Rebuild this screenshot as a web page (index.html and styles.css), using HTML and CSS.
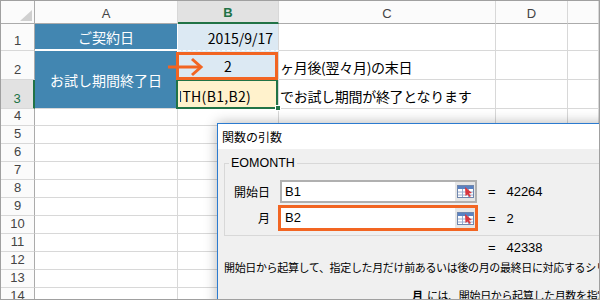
FILE: index.html
```html
<!DOCTYPE html>
<html lang="ja">
<head>
  <meta charset="UTF-8">
  <title>EOMONTH</title>
  <link rel="stylesheet" href="styles.css">
</head>
<body>

<div class="sheet">
  <div class="grid">
    <div class="corner"></div>
    <div class="colhead">A</div>
    <div class="colhead sel">B</div>
    <div class="colhead">C</div>
    <div class="colhead">D</div>
    <div class="colhead"></div>

    <div class="rowhead">1</div>
    <div class="cell blue">ご契約日</div>
    <div class="cell lightblue num">2015/9/17</div>
    <div class="cell"></div>
    <div class="cell"></div>
    <div class="cell"></div>

    <div class="rowhead">2</div>
    <div class="cell blue merged">お試し期間終了日</div>
    <div class="cell lightblue mid">2<span class="hl-box"></span></div>
    <div class="cell text">ヶ月後(翌々月)の末日</div>
    <div class="cell"></div>
    <div class="cell"></div>

    <div class="rowhead sel">3</div>
    <div class="cell yellow formula"><span class="clip"><span>=EOMONTH(B1,B2)</span></span><span class="sel-box"></span><span class="handle"></span></div>
    <div class="cell text">でお試し期間が終了となります</div>
    <div class="cell"></div>
    <div class="cell"></div>

    <div class="rowhead">4</div><div class="cell"></div><div class="cell"></div><div class="cell"></div><div class="cell"></div><div class="cell"></div>
    <div class="rowhead">5</div><div class="cell"></div><div class="cell"></div><div class="cell"></div><div class="cell"></div><div class="cell"></div>
    <div class="rowhead">6</div><div class="cell"></div><div class="cell"></div><div class="cell"></div><div class="cell"></div><div class="cell"></div>
    <div class="rowhead">7</div><div class="cell"></div><div class="cell"></div><div class="cell"></div><div class="cell"></div><div class="cell"></div>
    <div class="rowhead">8</div><div class="cell"></div><div class="cell"></div><div class="cell"></div><div class="cell"></div><div class="cell"></div>
    <div class="rowhead">9</div><div class="cell"></div><div class="cell"></div><div class="cell"></div><div class="cell"></div><div class="cell"></div>
    <div class="rowhead">10</div><div class="cell"></div><div class="cell"></div><div class="cell"></div><div class="cell"></div><div class="cell"></div>
    <div class="rowhead">11</div><div class="cell"></div><div class="cell"></div><div class="cell"></div><div class="cell"></div><div class="cell"></div>
    <div class="rowhead">12</div><div class="cell"></div><div class="cell"></div><div class="cell"></div><div class="cell"></div><div class="cell"></div>
    <div class="rowhead">13</div><div class="cell"></div><div class="cell"></div><div class="cell"></div><div class="cell"></div><div class="cell"></div>
    <div class="rowhead">14</div><div class="cell"></div><div class="cell"></div><div class="cell"></div><div class="cell"></div><div class="cell"></div>
  </div>

  <svg class="arrow" width="38" height="20" viewBox="0 0 38 20">
    <path d="M1 10 H34" stroke="#f26522" stroke-width="3" fill="none"/>
    <path d="M25 2 L34 10 L25 18" stroke="#f26522" stroke-width="3" fill="none" stroke-linejoin="miter"/>
  </svg>

  <div class="dialog">
    <div class="title">関数の引数</div>
    <div class="body">
      <fieldset class="group">
        <legend>EOMONTH</legend>
        <div class="args">
          <div class="label">開始日</div>
          <div class="field">
            <span class="val">B1</span>
            <span class="pick"><svg width="17" height="13" viewBox="0 0 17 13">
              <rect x="0.5" y="0.5" width="16" height="12" fill="#fff" stroke="#6f86ad"/>
              <rect x="1" y="1" width="15" height="3" fill="#5a82c2"/>
              <path d="M1 7 H16 M1 10 H16 M5.5 4 V12 M11.5 4 V12" stroke="#9aaed0" stroke-width="1"/>
              <path d="M8 2 L15 8 L12 8.5 L14 11 L12.5 12 L10.5 9.5 L8.5 11 Z" fill="#d9363e"/>
            </svg></span>
          </div>
          <div class="result">=&nbsp;&nbsp;&nbsp;42264</div>

          <div class="label">月</div>
          <div class="field hl">
            <span class="val">B2</span>
            <span class="pick"><svg width="17" height="13" viewBox="0 0 17 13">
              <rect x="0.5" y="0.5" width="16" height="12" fill="#fff" stroke="#6f86ad"/>
              <rect x="1" y="1" width="15" height="3" fill="#5a82c2"/>
              <path d="M1 7 H16 M1 10 H16 M5.5 4 V12 M11.5 4 V12" stroke="#9aaed0" stroke-width="1"/>
              <path d="M8 2 L15 8 L12 8.5 L14 11 L12.5 12 L10.5 9.5 L8.5 11 Z" fill="#d9363e"/>
            </svg></span>
          </div>
          <div class="result">=&nbsp;&nbsp;&nbsp;2</div>
        </div>
      </fieldset>
      <div class="total">=&nbsp;&nbsp;&nbsp;42338</div>
      <div class="desc">開始日から起算して、指定した月だけ前あるいは後の月の最終日に対応するシリアル値を返します。</div>
      <div class="note"><b>月</b>&nbsp;&nbsp;には、開始日から起算した月数を指定します。</div>
    </div>
  </div>
</div>

</body>
</html>
```

FILE: styles.css
```css
* { box-sizing: border-box; }
body {
  margin: 0;
  font-family: "Noto Sans CJK JP", "Noto Sans", sans-serif;
  color: #000;
  background: #fff;
}
.sheet {
  position: relative;
  width: 600px;
  height: 300px;
  border: 1px solid #a0a0a0;
  overflow: hidden;
}
.grid {
  display: grid;
  grid-template-columns: 34px 143px 101px 217px 72px 1fr;
  grid-template-rows: 23px 27px 29px 29px 17px repeat(10, 18px);
}
.corner, .colhead, .rowhead {
  background: #fbfbfb;
  color: #444;
  font-family: "Liberation Sans", "Noto Sans", sans-serif;
}
.corner {
  position: relative;
  border-right: 1px solid #ababab;
  border-bottom: 1px solid #ababab;
}
.corner::after {
  content: "";
  position: absolute;
  left: 19px;
  top: 9px;
  width: 12px;
  height: 11px;
  background: #d0d0d0;
  clip-path: polygon(100% 0, 100% 100%, 0 100%);
}
.colhead {
  display: flex;
  align-items: center;
  justify-content: center;
  font-size: 13px;
  border-right: 1px solid #d8d8d8;
  border-bottom: 1px solid #ababab;
  padding-top: 2px;
}
.colhead.sel {
  background: #e2e2e2;
  color: #217346;
  font-weight: bold;
  border-bottom: 2px solid #217346;
}
.rowhead {
  display: flex;
  align-items: flex-end;
  justify-content: center;
  font-size: 13px;
  line-height: 16px;
  padding-bottom: 1px;
  border-right: 1px solid #ababab;
  border-bottom: 1px solid #d8d8d8;
}
.rowhead.sel {
  background: #e2e2e2;
  color: #217346;
  border-right: 2px solid #217346;
}
.cell {
  position: relative;
  border-right: 1px solid #d8d8d8;
  border-bottom: 1px solid #d8d8d8;
  font-size: 14px;
  line-height: 18px;
  display: flex;
  align-items: flex-end;
  padding: 0 3px 3px;
  white-space: nowrap;
}
.cell.blue {
  background: #4286b1;
  color: #fff;
  justify-content: center;
  align-items: center;
  padding: 0;
  border-right: 1px solid #fff;
  border-bottom: 2px solid #fff;
}
.cell.merged {
  grid-row: span 2;
  border-bottom: 1px solid #d8d8d8;
}
.cell.lightblue {
  background: #dce9f3;
  border-bottom: 1px dashed #fff;
}
.cell.num { justify-content: flex-end; padding-right: 5px; }
.cell.mid { justify-content: center; padding-bottom: 4px; }
.cell.yellow { background: #fff2cc; }
.cell.text {
  overflow: visible;
  padding-left: 1px;
  letter-spacing: -0.3px;
  z-index: 1;
}
.cell.formula {
  padding: 0 27px 3px 2px;
  z-index: 2;
}
.clip {
  display: flex;
  justify-content: flex-end;
  width: 100%;
  overflow: hidden;
  letter-spacing: 0.3px;
}
.clip span { flex: none; }
.hl-box {
  position: absolute;
  left: -2px;
  top: 1px;
  width: 102px;
  height: 28px;
  border: 3px solid #f26522;
  z-index: 3;
}
.sel-box {
  position: absolute;
  left: -2px;
  top: -1px;
  width: 102px;
  height: 30px;
  border: 2px solid #217346;
}
.handle {
  position: absolute;
  right: -3px;
  bottom: -3px;
  width: 6px;
  height: 6px;
  background: #217346;
  border: 1px solid #fff;
}
.arrow {
  position: absolute;
  left: 166px;
  top: 56px;
  z-index: 4;
}
.dialog {
  position: absolute;
  left: 216px;
  top: 122px;
  width: 420px;
  height: 220px;
  border: 1px solid #2b7bd0;
  background: #f0f0f0;
  box-shadow: 0 0 12px rgba(0, 0, 0, 0.3);
  z-index: 5;
  font-size: 12px;
}
.title {
  height: 25px;
  line-height: 25px;
  background: #fff;
  padding-left: 4px;
}
.body {
  padding: 6px 0 0 6px;
}
.group {
  margin: 0;
  padding: 0 0 4px 0;
  border: 1px solid #d8d8d8;
  min-width: 0;
}
.group legend {
  margin-left: 4px;
  padding: 0 2px;
  font-family: "Liberation Sans", "Noto Sans", sans-serif;
  font-size: 12.5px;
  line-height: 16px;
}
.args {
  display: grid;
  grid-template-columns: 45px 197px auto;
  grid-template-rows: 23px 26px;
  column-gap: 10px;
  row-gap: 2px;
  align-items: center;
  margin-top: 9px;
}
.label {
  text-align: right;
  line-height: 16px;
}
.field {
  display: flex;
  height: 23px;
  border: 2px solid #b0b0b0;
  background: #fff;
}
.field.hl {
  height: 26px;
  width: 200px;
  margin-left: -2px;
  border: 3px solid #f26522;
}
.val {
  flex: 1;
  padding-left: 3px;
  font-family: "Liberation Sans", "Noto Sans", sans-serif;
  font-size: 13px;
  line-height: 19px;
}
.field.hl .val { line-height: 20px; padding-left: 4px; }
.pick {
  width: 20px;
  background: #e6e6e6;
  display: flex;
  align-items: center;
  justify-content: center;
}
.result, .total {
  font-family: "Liberation Sans", "Noto Sans", sans-serif;
  font-size: 13px;
  margin-left: 1px;
}
.total {
  margin: 4px 0 0 264px;
  line-height: 16px;
}
.desc {
  margin-top: 3px;
  font-size: 11px;
  line-height: 16px;
  letter-spacing: -0.35px;
  white-space: nowrap;
}
.note {
  margin: 12px 0 0 188px;
  font-size: 11px;
  line-height: 16px;
  letter-spacing: -0.35px;
  white-space: nowrap;
}
.note b { font-weight: bold; }
```
